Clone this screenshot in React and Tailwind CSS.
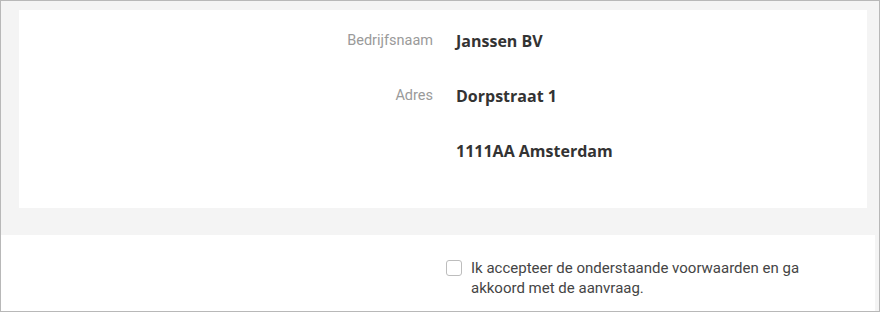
export default function App() {
  const rows = [
    { label: "Bedrijfsnaam", value: "Janssen BV" },
    { label: "Adres", value: "Dorpstraat 1" },
    { label: "", value: "1111AA Amsterdam" },
  ];
  return (
    <div className="w-[880px] h-[312px] border border-[#b8b8b8] bg-[#f4f4f4] flex flex-col">
      <div className="pl-[18px] pr-[12px] pt-[9px] h-[234px]">
        <div className="bg-white h-[198px] pt-[19px] flex flex-col gap-[31px]">
          {rows.map((r, i) => (
            <div key={i} className="flex items-center h-[24px]">
              <div
                className="w-[414px] text-right text-[14.5px] text-[#9a9a9a]"
                style={{ fontFamily: "Roboto, sans-serif" }}
              >
                {r.label}
              </div>
              <div
                className="ml-[23px] text-[16px] font-bold text-[#333]"
                style={{ fontFamily: "'Open Sans', sans-serif" }}
              >
                {r.value}
              </div>
            </div>
          ))}
        </div>
      </div>
      <div className="bg-white flex-1 mr-[4px] pt-[23px] pl-[445px]">
        <div className="flex items-start gap-[9px]">
          <div className="mt-[2px] w-[16px] h-[16px] border border-[#bdbdbd] rounded-[3px] bg-white shrink-0" />
          <div
            className="text-[15px] leading-[20px] text-[#454545] w-[345px]"
            style={{ fontFamily: "Roboto, sans-serif" }}
          >
            Ik accepteer de onderstaande voorwaarden en ga akkoord met de aanvraag.
          </div>
        </div>
      </div>
    </div>
  );
}
